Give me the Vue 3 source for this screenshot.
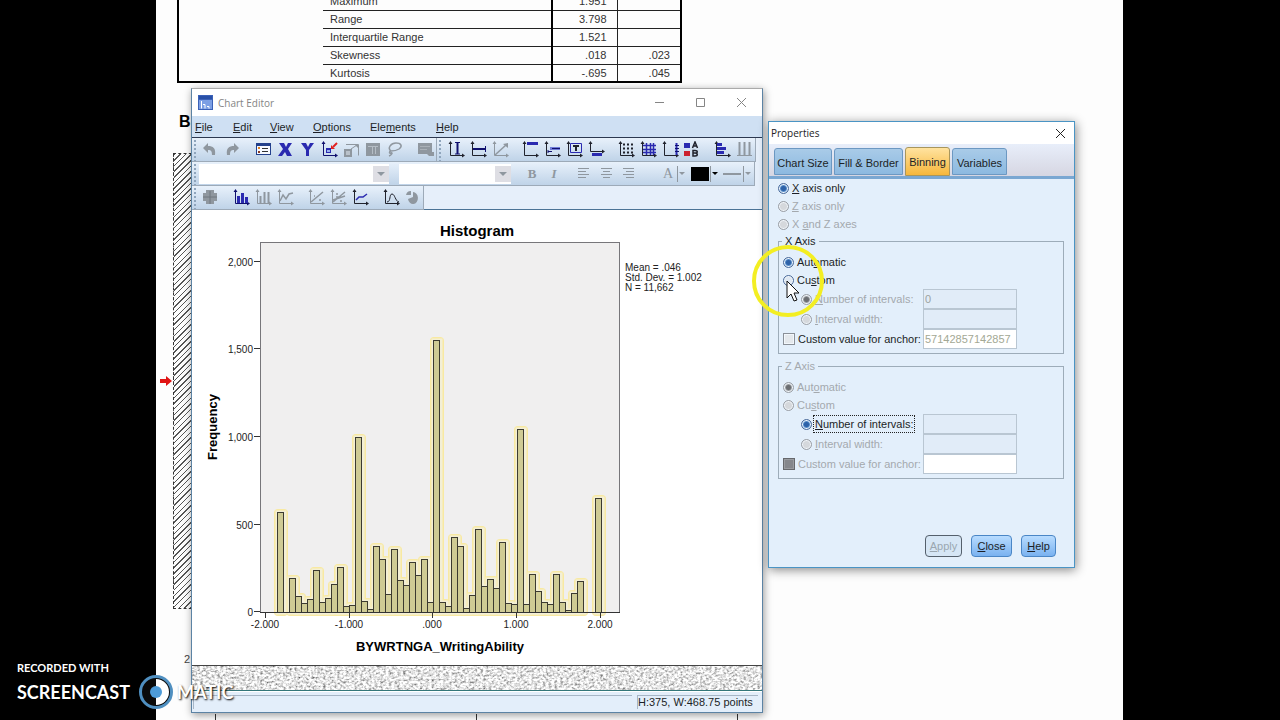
<script setup>
const stats = [
  ['Maximum', '1.951', ''],
  ['Range', '3.798', ''],
  ['Interquartile Range', '1.521', ''],
  ['Skewness', '.018', '.023'],
  ['Kurtosis', '-.695', '.045'],
]

const menus = [
  ['', 'F', 'ile', 38], ['', 'E', 'dit', 37], ['', 'V', 'iew', 43],
  ['', 'O', 'ptions', 57], ['Ele', 'm', 'ents', 66], ['', 'H', 'elp', 40],
]

const G = '#8f979f'
const N = '#10106e'
const K = '#20222c'
const B = '#2a2ab0'
const s = (d, c, w = 1) => ({ d, s: c, f: 'none', w })
const f = (d, c) => ({ d, s: 'none', f: c, w: 0 })
const axes = (c) => [s('M3.5 2v12.5H17', c, 1), f('M3.5 0l2 3h-4zM18 14.5l-3 2v-4z', c)]

const mainBar = [
  { t: 'Undo', p: [f('M2 7l5-5v3c5 0 8 2 7 9h-3c0-4-1-5-4-5v3z', G)] },
  { t: 'Redo', p: [f('M16 7l-5-5v3C6 5 3 7 4 14h3c0-4 1-5 4-5v3z', G)] },
  { t: 'Properties', g: 9, p: [f('M2 2h15v12H2z', '#22408c'), f('M3 5h13v8H3z', '#f6f9ff'), f('M4 6h2v2H4z', '#e08020'), f('M4 10h2v2H4z', '#8a3a20'), s('M8 7.5h6M8 10.5h6', '#333')] },
  { t: 'Select X axis', p: [f('M3 2h5l2 4 2-4h4l-4 6 4 7h-5l-2-4-3 4H2l5-7z', B)] },
  { t: 'Select Y axis', p: [f('M3 2h5l2 4 2-4h4l-5 7v6H8V9z', B)] },
  { t: 'Rescale chart', p: [...axes(N), f('M6 7h5v5H6z', B), f('M7 9h3v2H7z', '#9ab0f0'), f('M11 8V4l4 4z', '#e02020'), s('M13 6l4-4', '#e02020', 2)] },
  { t: 'Scale to data', p: [f('M2 8h8v8H2z', G), f('M4 10h4v4H4z', '#b9c1ca'), s('M4 3.5h12.5v11M9 8l6-4', G, 1), f('M16 3v4l-4-4z', G)] },
  { t: 'Layout', p: [f('M2 2h14v13H2z', G), s('M4 5.5h10M8.5 6v7M11.5 6v7', '#b5bdc5')] },
  { t: 'Lasso', p: [s('M5 10c-4-3 0-8 5-8s7 3 3 6c-3 2-6 2-8 2-2 0-2 3 0 2s1 2-2 3', G, 1.5)] },
  { t: 'Data label', g: 8, p: [f('M2 2h14v9h2v4h-5l-2-2H2z', G), s('M4 5.5h10M4 8.5h7', '#a9b0b7')] },
]
const elementBar = [
  { t: 'X reference line', p: [...axes(K), s('M10.5 2v11', N, 2), s('M8 1.5h5M8 13h5', N)] },
  { t: 'Y reference line', p: [...axes(K), s('M4 8h13', N, 2), s('M16.5 5v6', N)] },
  { t: 'Equation line', p: [...axes(G), s('M4 14L15 4', G, 1.5), f('M17 2v5l-5-4z', G)] },
  { t: 'Title', g: 8, p: [...axes(K), f('M6 1h11v3H6z', B)] },
  { t: 'Annotation', p: [...axes(K), f('M7 6h10v3H7z', '#6c79d8'), s('M5 10.5h4M5 9v3M9 7.5h8', N)] },
  { t: 'Text box', p: [...axes(K), s('M5.5 2.5h11v9h-11z', B), s('M8 5h6M11 5v5', K, 2)] },
  { t: 'Footnote', p: [s('M3.5 2v8.5H17', K), f('M3.5 0l2 3h-4zM18 10.5l-3 2v-4z', K), f('M5 12h10v3H5z', B)] },
  { t: 'Grid points', g: 8, p: [...axes(K), { d: 'M6 3.5h11M6 7.5h11M6 11.5h11', s: K, f: 'none', w: 2, a: '2 2' }] },
  { t: 'Grid lines', p: [...axes(K), s('M4 4.5h13M4 8.5h13M4 11.5h13M7.5 2v12M11.5 2v12M14.5 2v12', B, 1.5)] },
  { t: 'Derived axis', p: [...axes(K), s('M15.5 2v12', B, 2), s('M14 4.5h4M14 7.5h4M14 10.5h4', N)] },
  { t: 'Hide legend', p: [f('M1 2h6v5H1z', B), f('M1 10h6v5H1z', '#cc2230'), s('M9.500 7l2.500-6 2.500 6M11 5h3', K, 1.5), s('M10 9.500h2c3 0 3 2.500 0 2.500h-2 2c3 0 3 3 0 3h-2z', K, 1.5)] },
  { t: 'Transpose', g: 8, p: [...axes(K), f('M4 2h5v3H4zM4 6h9v3H4zM4 10h7v3H4z', B)] },
  { t: 'Bins', p: [s('M4.500 1v13M9.500 1v13M14.500 1v13', G, 2), s('M2 14.500h15', G)] },
]
const typeBar = [
  { t: 'Pivot', p: [f('M5 1h8v3h3v8h-3v3H5v-3H2V4h3z', G), s('M2 8h14M9 2v13', '#6f777f')] },
  { t: 'Bar', g: 9, p: [...axes(N), f('M5 7h3v7H5zM9 4h3v10H9zM13 8h3v6h-3z', B)] },
  { t: 'Interval', p: [...axes(G), s('M6.500 7v7M10.500 3v11M14.500 3v11', G, 2)] },
  { t: 'Line', p: [...axes(G), s('M4 12l3-6 3 4 3-5 4-1', G, 1.5)] },
  { t: 'Fit line', g: 9, p: [...axes(G), s('M4 13L16 3M7 7h1M12 11h2', G, 1.5)] },
  { t: 'Subgroup fit', p: [...axes(G), s('M4 13L16 3M4 11l12-4M7 5h2M11 12h2M7 8h5', G, 1.5)] },
  { t: 'Interpolation', p: [...axes(K), s('M5 11l3-3h4l4-3', B, 1.5)] },
  { t: 'Distribution', g: 9, p: [...axes(K), s('M5 13c4 0 2-8 5-8s3 7 7 8', K)] },
  { t: 'Explode slice', p: [f('M9 8V3a5 6 0 1 1-5 7l5-2z', G), f('M7 6V2a5 5 0 0 0-5 4z', G)] },
]
const aligns = [
  { t: 'Align left', d: 'M3 3.500h11M3 6.500h8M3 9.500h11M3 12.500h8' },
  { t: 'Align center', d: 'M4 3.500h11M6 6.500h7M4 9.500h11M6 12.500h7' },
  { t: 'Align right', d: 'M4 3.500h11M7 6.500h8M4 9.500h11M7 12.500h8' },
]

const tops = [
  513, null, 579, 597, 604, 600, 571, 603, 599, 585, 568, 607, 606, 438, 602, 610, 547, 560,
  595, 550, 581, 586, 563, 576, 560, 603, 341, 603, 607, 538, 547, 609, 596, 530, 587, 580,
  589, 543, 604, 605, 430, 605, 575, 592, 603, 605, 575, 603, 611, 594, 582, null, null, 499,
]
const bars = tops.map((y, i) => ({ x: 278 + i * 6, y })).filter((b) => b.y !== null)
const yTicks = [[262, '2,000'], [349, '1,500'], [437, '1,000'], [525, '500'], [612, '0']]
const xTicks = [[266, '-2.000'], [350, '-1.000'], [433, '.000'], [517, '1.000'], [601, '2.000']]

const scopes = [
  { l: ['', 'X', ' axis only'], on: true },
  { l: ['', 'Z', ' axis only'], off: true },
  { l: ['X ', 'a', 'nd Z axes'], off: true },
]
const groups = [
  { id: 'x', title: 'X Axis', off: false, intervalOff: true, focus: false, n: '0', anchor: '57142857142857' },
  { id: 'z', title: 'Z Axis', off: true, intervalOff: false, focus: true, n: '', anchor: '' },
]
const tabs = ['Chart Size', 'Fill & Border', 'Binning', 'Variables']
</script>

<template>
  <div class="desktop">
    <main class="doc">
      <table class="stats">
        <colgroup><col class="c0"><col class="c1"><col class="c2"><col class="c3"></colgroup>
        <tbody>
          <tr v-for="(r, i) in stats" :key="r[0]">
            <td v-if="i === 0" class="blank" :rowspan="stats.length"></td>
            <th scope="row">{{ r[0] }}</th>
            <td class="v">{{ r[1] }}</td>
            <td class="e">{{ r[2] }}</td>
          </tr>
        </tbody>
      </table>
      <h2 class="heading">B</h2>
      <div class="selection">
        <svg class="red" viewBox="0 0 12 10" aria-hidden="true"><path d="M0 3h6V0l6 5-6 5V7H0z" fill="#e01414" /></svg>
        <div class="hatch"></div>
      </div>
      <p class="folio">2</p>
      <div class="columns"><i></i><i></i></div>
    </main>

    <section class="win editor" aria-label="Chart Editor">
      <header class="title">
        <svg class="app" viewBox="0 0 15 15" aria-hidden="true">
          <path d="M0 0h15v15H0z" fill="#3c62b8" /><path d="M1 1h13v3H1z" fill="#2850a8" /><path d="M1 5h13v9H1z" fill="#7c9fe4" />
          <path d="M3.500 6v7.500M5 9.500h2v4M9 11.500h2v2" fill="none" stroke="#fff" />
        </svg>
        <span>Chart Editor</span>
        <div class="ctl">
          <button aria-label="Minimize"><svg viewBox="0 0 11 11"><path d="M1 5.500h9" /></svg></button>
          <button aria-label="Maximize"><svg viewBox="0 0 11 11"><path d="M1.500 1.500h8v8h-8z" /></svg></button>
          <button aria-label="Close"><svg viewBox="0 0 11 11"><path d="M1 1l9 9M10 1l-9 9" /></svg></button>
        </div>
      </header>
      <nav class="menus">
        <button v-for="m in menus" :key="m[1] + m[2]" :style="{ width: m[3] + 'px' }">{{ m[0] }}<u>{{ m[1] }}</u>{{ m[2] }}</button>
      </nav>
      <div class="bars">
        <div class="row">
          <div class="bar">
            <button v-for="b in mainBar" :key="b.t" class="ib" :class="b.g ? 'g' + b.g : ''" :aria-label="b.t">
              <svg viewBox="0 0 18 17"><path v-for="(p, i) in b.p" :key="i" :d="p.d" :fill="p.f" :stroke="p.s" :stroke-width="p.w" :stroke-dasharray="p.a" /></svg>
            </button>
          </div>
          <div class="bar wide">
            <button v-for="b in elementBar" :key="b.t" class="ib" :class="b.g ? 'g' + b.g : ''" :aria-label="b.t">
              <svg viewBox="0 0 18 17"><path v-for="(p, i) in b.p" :key="i" :d="p.d" :fill="p.f" :stroke="p.s" :stroke-width="p.w" :stroke-dasharray="p.a" /></svg>
            </button>
          </div>
        </div>
        <div class="row">
          <div class="bar format">
            <span class="combo family"><select aria-label="Font" disabled></select><i></i></span>
            <span class="combo size"><select aria-label="Font size" disabled></select><i></i></span>
            <button class="ib bold" aria-label="Bold">B</button>
            <button class="ib ital" aria-label="Italic">I</button>
            <button v-for="(a, i) in aligns" :key="a.t" class="ib" :class="i === 0 ? 'g8' : ''" :aria-label="a.t">
              <svg viewBox="0 0 18 17"><path :d="a.d" fill="none" stroke="#8f979f" /></svg>
            </button>
            <button class="ib pick letter" aria-label="Text color">A<i></i></button>
            <button class="ib pick fill" aria-label="Fill color"><b></b><i></i></button>
            <button class="ib pick line" aria-label="Line style"><b></b><i></i></button>
          </div>
        </div>
        <div class="row">
          <div class="bar types">
            <button v-for="b in typeBar" :key="b.t" class="ib" :class="b.g ? 'g' + b.g : ''" :aria-label="b.t">
              <svg viewBox="0 0 18 17"><path v-for="(p, i) in b.p" :key="i" :d="p.d" :fill="p.f" :stroke="p.s" :stroke-width="p.w" /></svg>
            </button>
          </div>
        </div>
      </div>
      <svg class="chart" viewBox="192 210 570 455" role="img" aria-label="Histogram">
        <rect x="260.500" y="242.500" width="359" height="370" fill="#f0efef" stroke="#77767a" />
        <g fill="none" stroke-linejoin="round">
          <rect v-for="b in bars" :key="b.x" :x="b.x" :y="b.y" width="6" :height="612 - b.y" stroke="#f8e9a2" stroke-width="8" />
        </g>
        <g fill="none" stroke="#f3efd6" stroke-width="5">
          <rect v-for="b in bars" :key="b.x" :x="b.x" :y="b.y" width="6" :height="612 - b.y" />
        </g>
        <g fill="#cfcb94" stroke="#3c3a30">
          <rect v-for="b in bars" :key="b.x" :x="b.x - 0.5" :y="b.y - 0.5" width="6" :height="613 - b.y" />
        </g>
        <path d="M260 612.500h360" stroke="#333" />
        <g class="tick">
          <template v-for="t in yTicks" :key="t[1]">
            <path :d="`M254 ${t[0] - 0.5}h6`" stroke="#333" />
            <text :x="253" :y="t[0] + 4" text-anchor="end">{{ t[1] }}</text>
          </template>
          <template v-for="t in xTicks" :key="t[1]">
            <path :d="`M${t[0] - 0.5} 613v5`" stroke="#333" />
            <text :x="t[0] - 1" y="628" text-anchor="middle">{{ t[1] }}</text>
          </template>
          <text x="625" y="271">Mean = .046</text>
          <text x="625" y="281">Std. Dev. = 1.002</text>
          <text x="625" y="291">N = 11,662</text>
        </g>
        <text class="name" x="477" y="236" text-anchor="middle">Histogram</text>
        <text class="axis" x="440" y="651" text-anchor="middle">BYWRTNGA_WritingAbility</text>
        <text class="axis" transform="translate(217 427) rotate(-90)" text-anchor="middle">Frequency</text>
      </svg>
      <svg class="texture" aria-hidden="true">
        <filter id="grain" x="0" y="0" width="100%" height="100%">
          <feTurbulence type="fractalNoise" baseFrequency="0.35 0.45" numOctaves="2" seed="4" />
          <feColorMatrix values="1.800 0 0 0 -0.120  1.800 0 0 0 -0.120  1.800 0 0 0 -0.120  0 0 0 0 1" />
        </filter>
        <rect width="100%" height="100%" filter="url(#grain)" />
      </svg>
      <footer class="status"><span></span><span class="dims">H:375, W:468.75 points</span></footer>
    </section>

    <section class="win props" aria-label="Properties">
      <header class="title">
        <span>Properties</span>
        <div class="ctl"><button aria-label="Close"><svg viewBox="0 0 11 11"><path d="M1 1l9 9M10 1l-9 9" /></svg></button></div>
      </header>
      <div class="tabs" role="tablist">
        <button v-for="t in tabs" :key="t" role="tab" :class="{ on: t === 'Binning' }" :aria-selected="t === 'Binning'">{{ t }}</button>
      </div>
      <form class="body" @submit.prevent>
        <label v-for="o in scopes" :key="o.l[2]" class="opt" :class="{ off: o.off }">
          <input type="radio" name="scope" :checked="o.on" :disabled="o.off">
          <span>{{ o.l[0] }}<u>{{ o.l[1] }}</u>{{ o.l[2] }}</span>
        </label>
        <fieldset v-for="g in groups" :key="g.id" :class="{ off: g.off }">
          <legend>{{ g.title }}</legend>
          <label class="opt" :class="{ off: g.off }">
            <input type="radio" :name="g.id + 'mode'" checked :disabled="g.off"><span>Aut<u>o</u>matic</span>
          </label>
          <label class="opt" :class="{ off: g.off }">
            <input type="radio" :name="g.id + 'mode'" :disabled="g.off"><span>Cu<u>s</u>tom</span>
          </label>
          <div class="field">
            <label class="opt sub" :class="{ off: g.intervalOff, focus: g.focus }">
              <input type="radio" :name="g.id + 'bins'" checked :disabled="g.intervalOff"><span><u>N</u>umber of intervals:</span>
            </label>
            <input type="text" aria-label="Number of intervals" :value="g.n" disabled>
          </div>
          <div class="field">
            <label class="opt sub off"><input type="radio" :name="g.id + 'bins'" disabled><span><u>I</u>nterval width:</span></label>
            <input type="text" aria-label="Interval width" disabled>
          </div>
          <div class="field">
            <label class="opt" :class="{ off: g.off }"><input type="checkbox" :disabled="g.off"><span>Custom value for anchor:</span></label>
            <input type="text" class="white" aria-label="Anchor value" :value="g.anchor">
          </div>
        </fieldset>
        <div class="actions">
          <button type="button" disabled><u>A</u>pply</button>
          <button type="button"><u>C</u>lose</button>
          <button type="button"><u>H</u>elp</button>
        </div>
      </form>
    </section>

    <svg class="pointer" viewBox="0 0 76 76" aria-hidden="true">
      <circle cx="38" cy="38" r="34" fill="none" stroke="#f3ee22" stroke-width="4" />
      <path d="M37 38v17l4-4 3 7 3-1-3-7h5z" fill="#fff" stroke="#111" />
    </svg>

    <div class="mark">
      <small>RECORDED WITH</small>
      <div>
        <span>SCREENCAST</span>
        <svg viewBox="0 0 36 36" aria-hidden="true">
          <circle cx="18" cy="18" r="15" fill="#0a0a0a" />
          <path d="M18 5a13 13 0 0 1 0 26z" fill="#fff" />
          <circle cx="18" cy="18" r="15.500" fill="none" stroke="#4f8fc0" stroke-width="3" />
          <circle cx="18" cy="18" r="6" fill="#4d9bd8" />
        </svg>
        <span>MATIC</span>
      </div>
    </div>
  </div>
</template>

<style>
body { margin: 0; background: #000; }
</style>

<style scoped>
* { box-sizing: border-box; }
button, input, select { font: inherit; color: inherit; margin: 0; }
button { padding: 0; border: 0; background: none; white-space: nowrap; }
.desktop { position: relative; height: 100vh; overflow: hidden; background: #000; padding: 0 157px 0 156px; font: 11px/16px "Liberation Sans", Arial, sans-serif; color: #1c1f26; }
.doc { height: 100%; background: #fdfdfd; overflow: hidden; }

.stats { table-layout: fixed; width: 503px; margin: -9px 0 0 21px; border-collapse: collapse; border: 2px solid #000; color: #333; }
.c0 { width: 145px; } .c1 { width: 229px; } .c2 { width: 65px; } .c3 { width: 64px; }
.stats tr { height: 18px; }
.stats td, .stats th { padding: 0 10px 0 7px; height: 18px; line-height: 16px; border-bottom: 1px solid #222; font-weight: 400; text-align: left; }
.stats .v, .stats .e { text-align: right; }
.stats .v { border-left: 2px solid #000; border-right: 1px solid #222; }
.heading { margin: 29px 0 0 23px; font-size: 16px; line-height: 20px; color: #000; }
.selection { display: flex; align-items: center; margin-top: 21px; margin-left: 4px; }
.red { width: 12px; height: 10px; }
.hatch { width: 40px; height: 456px; margin-left: 1px; border: dashed #333; border-width: 1px 0 1px 1px; background: repeating-linear-gradient(135deg, #555 0 1px, #fdfdfd 1px 4px); }
.folio { margin: 42px 0 0 28px; color: #444; }
.columns { display: flex; margin: 47px 0 0 59px; height: 8px; width: 523px; border: solid #333; border-width: 0 1px; }
.columns i { flex: 1; } .columns i + i { border-left: 1px solid #333; }

.win { position: absolute; display: flex; flex-direction: column; }
.editor { left: 191px; top: 88px; bottom: 7px; width: 572px; border: 1px solid #5c83a4; border-top-color: #aaa; background: #e6effa; box-shadow: 1px 2px 8px #0006; }
.props { left: 768px; top: 121px; width: 307px; border: 1px solid #4a94c4; background: #e3effb; box-shadow: 1px 2px 10px #0007; }
.title { display: flex; align-items: center; background: #fff; font: 10px/16px "Open Sans", sans-serif; }
.editor .title { height: 27px; padding-left: 6px; gap: 5px; color: #858585; }
.props .title { height: 22px; padding-left: 2px; color: #222; }
.app { width: 15px; height: 15px; }
.ctl { margin-left: auto; display: flex; }
.ctl button { width: 41px; height: 22px; display: grid; place-items: center; }
.props .ctl button { width: 28px; }
.ctl svg { width: 11px; height: 11px; fill: none; stroke: #858585; }
.props .ctl svg { stroke: #222; }
.menus { display: flex; height: 22px; padding-left: 3px; background: #cfe0f3; border-bottom: 1px solid #2c3850; }
.menus button { height: 21px; text-align: left; }
.bars { height: 72px; border-bottom: 1px solid #4b7396; }
.row { display: flex; height: 24px; }
.bar { display: flex; align-items: center; padding-left: 7px; border: solid #9daab8; border-width: 0 1px 1px 0; background: radial-gradient(#8fa5bc 1px, transparent 1px) 1px 1px / 4px 4px repeat-y, linear-gradient(#e8f1fb, #bfd3e8); }
.wide { padding-left: 8px; }
.types { width: 232px; }
.ib { width: 22px; height: 20px; display: grid; place-items: center; flex: none; color: #8f979f; }
.ib svg { width: 18px; height: 17px; display: block; }
.g8 { margin-left: 8px; } .g9 { margin-left: 9px; }
.combo { position: relative; display: flex; height: 20px; background: #fff; }
.combo select { appearance: none; border: 0; background: #fff; width: 100%; opacity: 1; }
.combo i { position: absolute; right: 0; top: 2px; width: 16px; height: 16px; background: #dedee4; }
.combo i::after, .pick i::after { content: ""; display: block; border: 4px solid transparent; border-top-color: #8f979f; border-bottom: 0; margin: 6px 4px; }
.family { width: 190px; margin-right: 10px; }
.size { width: 112px; margin-right: 10px; }
.bold, .ital { font: bold 13px/20px "Liberation Serif", serif; }
.ital { font-style: italic; }
.pick { display: flex; align-items: center; justify-content: flex-end; }
.pick i { width: 8px; height: 16px; border-left: 1px solid #8f979f; }
.pick i::after { border-width: 3px 3px 0; margin: 6px 1px; }
.letter { width: 46px; gap: 4px; font: 14px/20px "Liberation Serif", serif; }
.fill { width: 32px; margin-left: 1px; } .fill b { width: 18px; height: 14px; background: #000; margin-right: 1px; }
.fill i::after { border-top-color: #000; }
.line { width: 33px; margin-right: 3px; } .line b { width: 18px; height: 2px; background: #8f979f; margin-right: 2px; }
.chart { flex: 1; min-height: 0; width: 100%; background: #fff; border-bottom: 1px solid #444; font-family: "Liberation Sans", Arial, sans-serif; }
.tick { font-size: 10px; fill: #222; }
.name { font-size: 15px; font-weight: 700; fill: #000; }
.axis { font-size: 13px; font-weight: 700; fill: #000; }
.texture { width: 100%; height: 25px; border-bottom: 1px solid #34777a; }
.status { display: flex; gap: 5px; height: 21px; padding: 3px 4px 3px 1px; background: #e3eefa; border-top: 1px solid #fff; }
.status span { flex: 1; border: solid #a7b6c6; border-width: 1px 0 0 1px; line-height: 13px; }
.status .dims { flex: none; width: 121px; white-space: nowrap; }

.tabs { display: flex; align-items: flex-end; gap: 2px; height: 35px; padding: 0 5px; border-bottom: 3px solid #7aa7d2; background: linear-gradient(#e8eefa, #d6d6e2); }
.tabs button { width: 58px; height: 27px; padding-top: 3px; margin-bottom: 1px; border: 1px solid #6c98c2; border-radius: 3px 3px 0 0; background: linear-gradient(#a9cbe8, #8cb9e0); }
.tabs button:nth-child(2) { width: 69px; }
.tabs button:nth-child(4) { width: 55px; }
.tabs .on { width: 45px; height: 29px; padding-top: 0; margin-bottom: 0; background: linear-gradient(#ffe3a0, #f6b73c); border-color: #a8965c; }
.body { padding: 0 10px 10px 9px; }
.opt { display: flex; align-items: center; gap: 1px; height: 18px; }
.opt span { white-space: nowrap; padding: 0 1px; border: 1px solid transparent; }
.off { color: #a4a9ae; }
.opt input { appearance: none; flex: none; width: 11px; height: 11px; border: 1px solid #4a6a9a; border-radius: 50%; background: #dfe8f2; box-shadow: inset 0 0 0 1px #f2f7fc; }
.opt input:checked { background: radial-gradient(#2d62a8 0 2px, #7ab0e4 4px); }
.opt input:disabled { border-color: #9a9fa6; background: #d5d8dc; }
.opt input:disabled:checked { background: radial-gradient(#6b6e72 0 2px, #c4c8cc 4px); }
.opt input[type="checkbox"] { width: 12px; height: 12px; border-radius: 0; border-color: #8a9098; background: #e4e8ec; }
.opt input[type="checkbox"]:disabled { background: #85878c; border-color: #66686c; box-shadow: inset 0 0 0 1px #9a9ca0; }
fieldset { min-width: 0; margin: 2px 0 6px; padding: 6px 46px 4px 4px; border: 1px solid #9dacb9; }
fieldset + fieldset { margin-top: 0; }
legend { padding: 0 3px; margin-left: -1px; line-height: 12px; height: 12px; }
.field { display: flex; justify-content: space-between; height: 20px; }
.field .opt { height: 20px; min-width: 0; }
.field .sub { padding-left: 18px; }
.field .focus { color: #1c1f26; }
.focus span { border: 1px dotted #222; }
.field input[type="text"] { width: 94px; flex: none; height: 20px; padding: 0 1px; border: 1px solid #b9c6d2; background: #e1ecf8; color: #9da3a0; }
.field input.white[type="text"] { background: #fff; color: #a3a894; }
.actions { display: flex; justify-content: flex-end; gap: 9px; margin-top: 56px; padding-right: 8px; }
.actions button { width: 35px; height: 22px; border: 1px solid #4a86c6; border-radius: 4px; background: linear-gradient(#b8dcff, #7ab2f0); }
.actions button:nth-child(1) { width: 37px; color: #9aa6b0; background: #d6e6f5; border-color: #55606c; }
.actions button:nth-child(2) { width: 41px; }

.pointer { position: absolute; left: 750px; top: 243px; width: 76px; height: 76px; }
.mark { position: absolute; left: 17px; bottom: 10px; color: #fff; font: bold 18px/20px Lato, sans-serif; text-shadow: 1px 1px 2px #000; }
.mark small { display: block; font-size: 11px; line-height: 12px; }
.mark div { display: flex; align-items: center; }
.mark svg { width: 36px; height: 36px; margin: 0 3px 0 8px; }
</style>
